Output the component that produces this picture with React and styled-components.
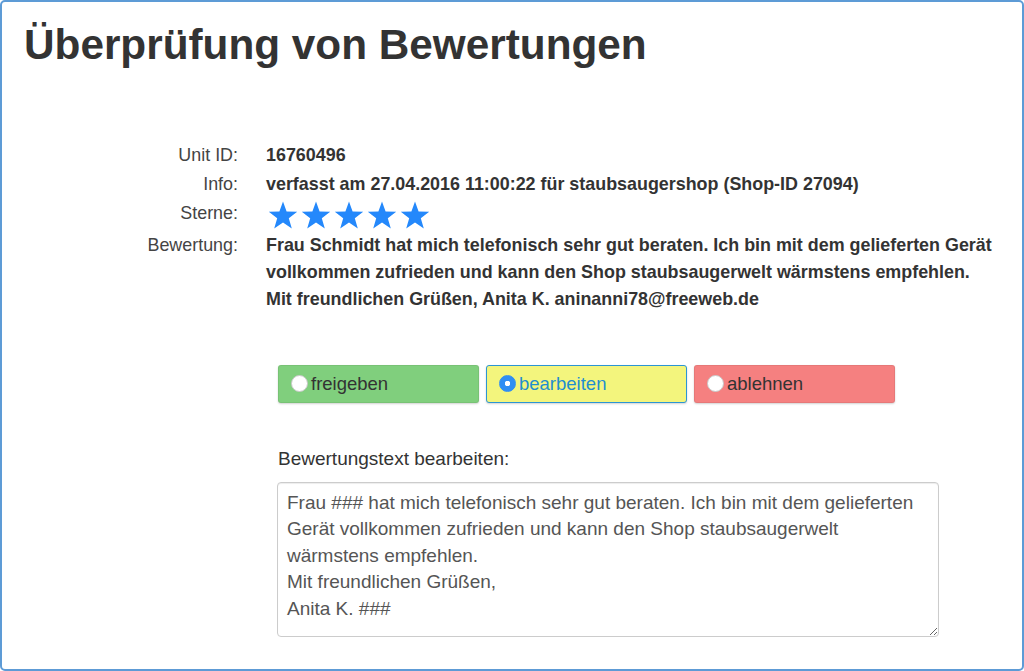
import React from "react";
import styled, { createGlobalStyle } from "styled-components";

const GlobalStyle = createGlobalStyle`
  html, body {
    margin: 0;
    padding: 0;
    background: #fff;
  }
  body {
    font-family: "Liberation Sans", Arial, Helvetica, sans-serif;
    color: #333;
  }
`;

const review = {
  unitId: "16760496",
  info: "verfasst am 27.04.2016 11:00:22 für staubsaugershop (Shop-ID 27094)",
  stars: 5,
  text: "Frau Schmidt hat mich telefonisch sehr gut beraten. Ich bin mit dem gelieferten Gerät vollkommen zufrieden und kann den Shop staubsaugerwelt wärmstens empfehlen.",
  signature: "Mit freundlichen Grüßen, Anita K. aninanni78@freeweb.de",
};

const editText =
  "Frau ### hat mich telefonisch sehr gut beraten. Ich bin mit dem gelieferten\nGerät vollkommen zufrieden und kann den Shop staubsaugerwelt\nwärmstens empfehlen.\nMit freundlichen Grüßen,\nAnita K. ###";

const options = [
  { id: "freigeben", label: "freigeben", bg: "#80cf7d" },
  { id: "bearbeiten", label: "bearbeiten", bg: "#f3f57d" },
  { id: "ablehnen", label: "ablehnen", bg: "#f58080" },
];

const Star = () => (
  <svg width="30" height="29" viewBox="0 0 30 29">
    <polygon
      fill="#2488fb"
      points="15,0.5 18.6,10.4 29.2,10.7 20.8,17.2 23.8,27.6 15,21.5 6.2,27.6 9.2,17.2 0.8,10.7 11.4,10.4"
    />
  </svg>
);

const App = () => {
  const [choice, setChoice] = React.useState("bearbeiten");

  return (
    <>
      <GlobalStyle />
      <Frame>
        <Title>Überprüfung von Bewertungen</Title>

        <Details>
          <Label>Unit ID:</Label>
          <Value>{review.unitId}</Value>

          <Label>Info:</Label>
          <Value>{review.info}</Value>

          <Label>Sterne:</Label>
          <Stars>
            {Array.from({ length: review.stars }).map((_, i) => (
              <Star key={i} />
            ))}
          </Stars>

          <Label $dense>Bewertung:</Label>
          <Value $dense $wrap>
            {review.text}
            <br />
            {review.signature}
          </Value>
        </Details>

        <Choices>
          {options.map((o) => (
            <Choice key={o.id} $bg={o.bg} $active={choice === o.id}>
              <Radio
                type="radio"
                name="decision"
                checked={choice === o.id}
                onChange={() => setChoice(o.id)}
              />
              {o.label}
            </Choice>
          ))}
        </Choices>

        <EditLabel>Bewertungstext bearbeiten:</EditLabel>
        <EditArea defaultValue={editText} />
      </Frame>
    </>
  );
};

const Frame = styled.div`
  box-sizing: border-box;
  width: 1024px;
  height: 671px;
  border: 2px solid #5d9bd6;
  border-radius: 5px;
  padding: 19px 22px 0;
  overflow: hidden;
`;

const Title = styled.h1`
  margin: 0;
  font-size: 42.3px;
  font-weight: bold;
  line-height: 1.15;
  color: #333;
`;

const Details = styled.div`
  display: grid;
  grid-template-columns: 214px 1fr;
  column-gap: 28px;
  align-items: start;
  margin-top: 71px;
`;

const Label = styled.div`
  text-align: right;
  font-size: 17.9px;
  line-height: ${(p) => (p.$dense ? "27px" : "29px")};
  color: #444;
`;

const Value = styled.div`
  font-size: 17.9px;
  font-weight: bold;
  line-height: ${(p) => (p.$dense ? "27px" : "29px")};
  color: #333;
  max-width: ${(p) => (p.$wrap ? "745px" : "none")};
`;

const Stars = styled.div`
  display: flex;
  gap: 3px;
  height: 33px;
  padding: 2px 0 0 2px;
  box-sizing: border-box;
`;

const Choices = styled.div`
  display: flex;
  gap: 7px;
  margin: 52px 0 0 254px;
`;

const Choice = styled.label`
  box-sizing: border-box;
  width: 201px;
  height: 38px;
  display: flex;
  align-items: center;
  padding-left: 12px;
  background: ${(p) => p.$bg};
  border: ${(p) => (p.$active ? "1.5px solid #2b95d4" : "1px solid rgba(0, 0, 0, 0.06)")};
  border-radius: 3px;
  box-shadow: 0 1px 2px rgba(0, 0, 0, 0.18);
  font-size: 18.5px;
  color: ${(p) => (p.$active ? "#1f8ecf" : "#333")};
  cursor: pointer;
`;

const Radio = styled.input`
  appearance: none;
  -webkit-appearance: none;
  width: 17px;
  height: 17px;
  margin: 0 3px 0 0;
  border-radius: 50%;
  background: #fff;
  border: 1px solid #c8c8c8;
  box-sizing: border-box;
  flex-shrink: 0;
  &:checked {
    background: radial-gradient(circle, #fff 0 2.5px, #2f8ef3 3px);
    border-color: #2f8ef3;
  }
`;

const EditLabel = styled.div`
  margin: 45px 0 0 254px;
  font-size: 19px;
  line-height: 22px;
  color: #333;
`;

const EditArea = styled.textarea`
  display: block;
  box-sizing: border-box;
  width: 662px;
  height: 155px;
  margin: 12px 0 0 253px;
  padding: 7px 9px;
  border: 1px solid #ccc;
  border-radius: 4px;
  box-shadow: inset 0 1px 1px rgba(0, 0, 0, 0.075);
  font-family: "Liberation Sans", Arial, Helvetica, sans-serif;
  font-size: 19px;
  line-height: 26.5px;
  color: #555;
  resize: both;
  outline: none;
`;

export default App;
